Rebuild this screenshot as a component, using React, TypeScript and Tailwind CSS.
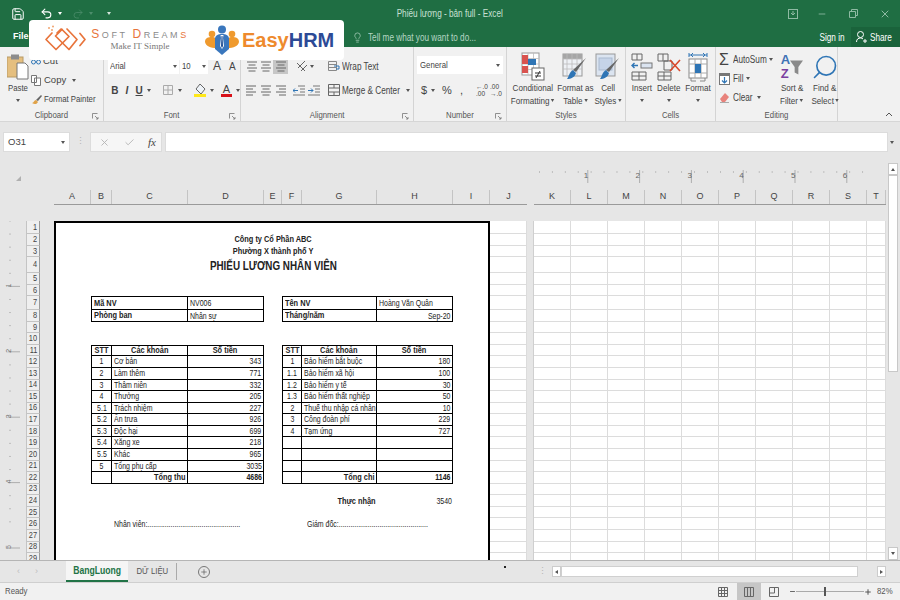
import type { ReactNode } from "react";
import { Check, Lightbulb, Save, Search, Undo2, Redo2, X, Plus, Minus } from "lucide-react";

const rowHeights = [
  "h-[13px]", "h-[11.7px]", "h-[11.7px]", "h-[16px]", "h-[12px]", "h-[11px]", "h-[14px]", "h-[12px]", "h-[11px]", "h-[11.5px]",
  "h-[11.57px]", "h-[11.57px]", "h-[11.57px]", "h-[11.57px]", "h-[11.57px]", "h-[11.57px]", "h-[11.57px]", "h-[11.57px]", "h-[11.57px]", "h-[11.57px]", "h-[11.57px]", "h-[11.57px]",
  "h-[11.6px]", "h-[11.6px]", "h-[11.6px]", "h-[11.6px]", "h-[11.6px]", "h-[11.6px]", "h-[11.6px]",
];

const pageCols = [
  { k: "A", w: "w-[37px]" },
  { k: "B", w: "w-[21px]" },
  { k: "C", w: "w-[76px]" },
  { k: "D", w: "w-[76px]" },
  { k: "E", w: "w-[18px]" },
  { k: "F", w: "w-[20px]" },
  { k: "G", w: "w-[75px]" },
  { k: "H", w: "w-[76px]" },
  { k: "I", w: "w-[37px]" },
];
const rightCols = [
  { k: "K", w: "w-[37px]" },
  { k: "L", w: "w-[37px]" },
  { k: "M", w: "w-[37px]" },
  { k: "N", w: "w-[37px]" },
  { k: "O", w: "w-[37px]" },
  { k: "P", w: "w-[37px]" },
  { k: "Q", w: "w-[37px]" },
  { k: "R", w: "w-[37px]" },
  { k: "S", w: "w-[37px]" },
  { k: "T", w: "w-[19px]" },
];

// the screenshot is squeezed sideways, so its text runs narrower than Arial
const squeezeL = "inline-block whitespace-nowrap scale-x-[.82] origin-left";
const squeezeC = "inline-block whitespace-nowrap scale-x-[.82] origin-center";
const squeezeR = "inline-block whitespace-nowrap scale-x-[.82] origin-right";

const bold = "font-bold text-[9px]";
const cells: Record<string, { t: string; c?: string }> = {
  E2: { t: "Công ty Cổ Phần ABC", c: "justify-center font-bold text-[9px]" },
  E3: { t: "Phường X thành phố Y", c: "justify-center font-bold text-[9px]" },
  E4: { t: "PHIẾU LƯƠNG NHÂN VIÊN", c: "justify-center font-bold text-[12px] pt-[2px]" },
  B7: { t: "Mã NV", c: bold },
  D7: { t: "NV006" },
  B8: { t: "Phòng ban", c: bold },
  D8: { t: "Nhân sự" },
  F7: { t: "Tên NV", c: bold },
  H7: { t: "Hoàng Văn Quân" },
  F8: { t: "Tháng/năm", c: bold },
  H8: { t: "Sep-20", c: "justify-end" },
  B11: { t: "STT", c: "justify-center font-bold text-[9px]" },
  C11: { t: "Các khoản", c: "justify-center font-bold text-[9px]" },
  D11: { t: "Số tiền", c: "justify-center font-bold text-[9px]" },
  F11: { t: "STT", c: "justify-center font-bold text-[9px]" },
  G11: { t: "Các khoản", c: "justify-center font-bold text-[9px]" },
  H11: { t: "Số tiền", c: "justify-center font-bold text-[9px]" },
  C22: { t: "Tổng thu", c: "justify-end font-bold text-[9px]" },
  D22: { t: "4686", c: "justify-end font-bold" },
  G22: { t: "Tổng chi", c: "justify-end font-bold text-[9px]" },
  H22: { t: "1146", c: "justify-end font-bold" },
  G24: { t: "Thực nhận", c: "justify-end font-bold text-[9px]" },
  H24: { t: "3540", c: "justify-end" },
  C26: { t: "Nhân viên:................................................" },
  G26: { t: "Giám đốc:..............................................", c: "pl-[5px]" },
};

const leftRows = [
  ["1", "Cơ bản", "343"], ["2", "Làm thêm", "771"], ["3", "Thâm niên", "332"], ["4", "Thưởng", "205"],
  ["5.1", "Trách nhiệm", "227"], ["5.2", "Ăn trưa", "926"], ["5.3", "Độc hại", "699"], ["5.4", "Xăng xe", "218"],
  ["5.5", "Khác", "965"], ["5", "Tổng phụ cấp", "3035"],
];
const rightRows = [
  ["1", "Bảo hiểm bắt buộc", "180"], ["1.1", "Bảo hiểm xã hội", "100"], ["1.2", "Bảo hiểm y tế", "30"],
  ["1.3", "Bảo hiểm thất nghiệp", "50"], ["2", "Thuế thu nhập cá nhân", "10"], ["3", "Công đoàn phí", "229"], ["4", "Tạm ứng", "727"],
];
leftRows.forEach(([a, b, c], i) => {
  cells[`B${12 + i}`] = { t: a, c: "justify-center" };
  cells[`C${12 + i}`] = { t: b };
  cells[`D${12 + i}`] = { t: c, c: "justify-end" };
});
rightRows.forEach(([a, b, c], i) => {
  cells[`F${12 + i}`] = { t: a, c: "justify-center" };
  cells[`G${12 + i}`] = { t: b };
  cells[`H${12 + i}`] = { t: c, c: "justify-end" };
});

// table borders of the payslip, by column and row
function borderFor(col: string, row: number) {
  const inInfo = row === 7 || row === 8;
  const inList = row >= 11 && row <= 22;
  if (!inInfo && !inList) return "";
  if (!"BCDFGH".includes(col)) return "";
  let b = "border-b border-black";
  if (row === 7 || row === 11) b += " border-t";
  if (col === "B" || col === "F") b += " border-l";
  if (col === "D" || col === "H") b += " border-r";
  if (col === "C" || col === "G") b += " border-r";
  if (inList && (col === "B" || col === "F")) b += " border-r";
  return b;
}

function squeezeFor(c?: string) {
  if (c?.includes("justify-end")) return squeezeR;
  if (c?.includes("justify-center")) return squeezeC;
  return squeezeL;
}

function Caret({ className = "" }: { className?: string }) {
  return <span className={`inline-block shrink-0 border-t-[3px] border-x-[2px] border-x-transparent border-t-[#555] ${className}`} />;
}

function Launcher() {
  return (
    <svg width="7" height="7" viewBox="0 0 7 7" className="absolute right-[4px] top-[4px]">
      <path d="M0.5 0.5h5M0.5 0.5v5M3 3l3 3M6 4v2H4" stroke="#777" strokeWidth="0.8" fill="none" />
    </svg>
  );
}

function Group({ label, w, launcher, children }: { label: string; w: string; launcher?: boolean; children: ReactNode }) {
  return (
    <div className={`${w} shrink-0 border-r border-[#d4d4d4] flex flex-col`}>
      <div className="h-[63px]">{children}</div>
      <div className="relative h-[12px] flex items-center justify-center text-[9.5px] text-[#555]">
        <span className={squeezeC}>{label}</span>
        {launcher && <Launcher />}
      </div>
    </div>
  );
}

function BigButton({ w, icon, line1, line2, caretOnly }: { w: string; icon: ReactNode; line1: string; line2?: string; caretOnly?: boolean }) {
  return (
    <div className={`${w} shrink-0 flex flex-col items-center whitespace-nowrap text-[9.5px] text-[#444] leading-[13px]`}>
      <div className="h-[29px] mt-[5px] flex items-center justify-center">{icon}</div>
      <div className="scale-x-[.85]">{line1}</div>
      {caretOnly ? (
        <Caret className="mt-[5px]" />
      ) : (
        <div className="flex items-center gap-[2px] scale-x-[.85]">
          {line2}
          <Caret />
        </div>
      )}
    </div>
  );
}

function Lines({ kind }: { kind: "left" | "center" | "right" }) {
  const ds = {
    left: "M1 2h10M1 5h7M1 8h10M1 11h7",
    center: "M1 2h10M2.5 5h7M1 8h10M2.5 11h7",
    right: "M1 2h10M4 5h7M1 8h10M4 11h7",
  };
  return (
    <svg width="12" height="13" viewBox="0 0 12 13">
      <path d={ds[kind]} stroke="#666" strokeWidth="1" />
    </svg>
  );
}

function ConditionalIcon() {
  return (
    <svg width="24" height="29" viewBox="0 0 24 29">
      <rect x="1" y="1" width="17" height="22" fill="#fff" stroke="#999" />
      <path d="M7 1v22M12.500 1v22M1 6.500h17M1 12h17M1 17.500h17" stroke="#bbb" strokeWidth="0.8" />
      <rect x="1" y="3" width="6" height="9" fill="#d9534f" />
      <rect x="7" y="7" width="8" height="6" fill="#2f75b5" />
      <rect x="1" y="14" width="6" height="7" fill="#d9534f" />
      <rect x="11" y="16" width="12" height="12" fill="#fff" stroke="#666" />
      <path d="M14 21h6M14 24h6M19 19l-4 7" stroke="#333" />
    </svg>
  );
}

function BrushTableIcon({ plain }: { plain?: boolean }) {
  return (
    <svg width="26" height="29" viewBox="0 0 26 29">
      <rect x="1" y="2" width="19" height="22" fill={plain ? "#dbe4f0" : "#eef1f5"} stroke="#999" />
      {plain ? (
        <rect x="4" y="6" width="13" height="12" fill="#c6d4e8" stroke="#a9b9cf" />
      ) : (
        <>
          <rect x="1" y="2" width="19" height="5" fill="#a6a6a6" />
          <path d="M5 2v22M10 2v22M15 2v22M1 7h19M1 12h19M1 17h19" stroke="#bbb" strokeWidth="0.8" />
        </>
      )}
      <path d="M24 6L14 20l-3-2z" fill="#666" />
      <path d="M11 18l3 3c-1 4-5 6-9 6 2-2 2-7 6-9z" fill="#2f75b5" />
    </svg>
  );
}

function InsertIcon() {
  return (
    <svg width="22" height="28" viewBox="0 0 22 28">
      <path d="M1 1h10v6H1zM6 1v6M1 19h14v8H1zM8 19v8M1 23h14" stroke="#666" fill="none" />
      <path d="M1 12.500h6M3.500 10l-2.500 2.500L3.500 15" stroke="#2f75b5" strokeWidth="1.400" fill="none" />
      <rect x="10" y="10" width="11" height="5" fill="#dbe4f0" stroke="#777" />
    </svg>
  );
}

function DeleteIcon() {
  return (
    <svg width="26" height="28" viewBox="0 0 26 28">
      <path d="M2 1h10v7H2zM7 1v7M2 19h13v8H2zM8 19v8M2 23h13M8 8h8v9H8z" stroke="#666" fill="none" />
      <path d="M14 7l10 11M24 7L14 18" stroke="#d9482b" strokeWidth="1.600" />
    </svg>
  );
}

function FormatIcon() {
  return (
    <svg width="20" height="30" viewBox="0 0 20 30">
      <path d="M1 3h18M1 1v4M19 1v4" stroke="#2f75b5" />
      <path d="M3 3l2-2M3 3l2 2M17 3l-2-2M17 3l-2 2" stroke="#2f75b5" fill="none" />
      <rect x="1" y="7" width="18" height="19" fill="#fff" stroke="#888" />
      <path d="M7 7v19M13 7v19M1 12h18M1 21h18" stroke="#aaa" />
      <rect x="7" y="12" width="6" height="9" fill="#2f75b5" />
      <path d="M3 26v3h5M12 29h5v-3" stroke="#888" fill="none" />
    </svg>
  );
}

function SortIcon() {
  return (
    <div className="relative flex items-center">
      <div className="flex flex-col leading-[14px] text-[13px] font-bold">
        <span className="text-[#3f72b5]">A</span>
        <span className="text-[#7b3fa0]">Z</span>
      </div>
      <svg width="13" height="18" viewBox="0 0 14 18">
        <path d="M0 2h14L9 9v8l-4-2V9z" fill="#8a8a8a" />
      </svg>
    </div>
  );
}

function Clipboard() {
  return (
    <svg width="22" height="26" viewBox="0 0 22 26">
      <rect x="0" y="3" width="16" height="20" fill="#e5bf7f" stroke="#b89a66" />
      <rect x="4" y="0.500" width="8" height="5" fill="#8c8c8c" />
      <path d="M10 9h8l3 3v13H10z" fill="#fff" stroke="#777" />
    </svg>
  );
}

function SoftDreamsMark() {
  return (
    <svg width="42" height="32" viewBox="0 0 42 32">
      <g fill="none" stroke="#e8743b" strokeWidth="1.700" strokeLinejoin="round" strokeLinecap="round">
        <path d="M8 9L2 15.500l10 10 13-13-7-7" />
        <path d="M13 9l4-4 1 .5L11.500 12 25 25.500l8-10L23 5" />
        <path d="M36 9.500l5 6-5 6" />
      </g>
      <g fill="#f0a36e">
        <circle cx="5" cy="4" r="1" />
        <circle cx="9" cy="2.500" r="1" />
        <circle cx="8" cy="6" r="1" />
      </g>
    </svg>
  );
}

function HrmMark() {
  return (
    <svg width="36" height="30" viewBox="0 0 36 30">
      <circle cx="18" cy="4.500" r="4" fill="#3a77bd" />
      <circle cx="8" cy="9" r="3.300" fill="#ef9a2e" />
      <circle cx="28" cy="9" r="3.300" fill="#ef9a2e" />
      <path d="M1 17c0-4 3-5 7-5 3 0 5 2 5 5v6C6 23 2 21 1 17zM35 17c0-4-3-5-7-5-3 0-5 2-5 5v6c7 0 11-2 12-6z" fill="#ef9a2e" />
      <path d="M11 13c1-3 3-4 7-4s6 1 7 4v11l-7 6-7-6z" fill="#3a77bd" />
      <path d="M16.500 10h3l-.5 3 1 8-2 3-2-3 1-8z" fill="#fff" />
      <path d="M17.500 11h1l.5 10-1 2-1-2z" fill="#1f4f94" />
    </svg>
  );
}

function LeftRuler() {
  const minor = Array.from({ length: 24 }, (_, i) => i * 13.08 + 221);
  const major = [1, 2, 3, 4, 5];
  return (
    <svg width="26" height="339" viewBox="0 221 26 339">
      {minor.map((y) => (
        <path key={y} d={`M9 ${y}h2`} stroke="#bdbdbd" />
      ))}
      {major.map((n) => {
        const y = 221 + n * 65.4;
        return (
          <g key={n}>
            <path d={`M8 ${y}h12`} stroke="#888" strokeWidth="0.600" />
            <text x="13" y={y + 3} fontSize="7" fill="#777" transform={`rotate(-90 11 ${y + 3})`}>
              {n}
            </text>
          </g>
        );
      })}
    </svg>
  );
}

function TopRuler() {
  const ticks = Array.from({ length: 26 }, (_, i) => i * 12.93 + 6);
  return (
    <svg width="353" height="30" viewBox="533 160 353 30" className="mt-[1px]">
      {ticks.map((x) => (
        <path key={x} d={`M${533 + x} 172h0.800`} stroke="#b5b5b5" strokeWidth="2" />
      ))}
      {[1, 2, 3, 4, 5, 6].map((n) => {
        const x = 532 + n * 51.8;
        return (
          <g key={n}>
            <path d={`M${x + 4} 170v13`} stroke="#888" strokeWidth="0.600" />
            <text x={x} y="178" fontSize="8" fill="#666">
              {n}
            </text>
          </g>
        );
      })}
    </svg>
  );
}

export default function App() {
  return (
    <div className="relative w-[900px] h-[600px] overflow-hidden bg-[#e6e6e6] text-[#333] flex flex-col [font-family:'Liberation_Sans',Arial,sans-serif] [&_svg]:shrink-0">
      {/* title bar + tab strip */}
      <div className="h-[47px] shrink-0 bg-[#1f6e43] text-white flex flex-col">
        <div className="h-[27px] grid grid-cols-[1fr_auto_1fr] items-center">
          <div className="flex items-center pl-[11px]">
            <Save size={14} strokeWidth={1.7} />
            <Undo2 size={13} strokeWidth={2} className="ml-[15px]" />
            <Caret className="ml-[5px] !border-t-white" />
            <Redo2 size={12} strokeWidth={1.5} className="ml-[10px] text-[#4d8d6c]" />
            <Caret className="ml-[5px] !border-t-[#4d8d6c]" />
            <Caret className="ml-[14px] !border-t-[#d5e6dc]" />
          </div>
          <div className={`${squeezeC} text-[10px] text-[#c9e0d3]`}>Phiếu lương - bản full - Excel</div>
          <div className="flex items-center justify-end pr-[9px] text-[#8fbaa3]">
            <svg width="10" height="10" viewBox="0 0 10 10">
              <rect x="0.500" y="0.500" width="9" height="9" fill="none" stroke="currentColor" />
              <path d="M5 2v4M3 4l2 2 2-2" stroke="currentColor" fill="none" />
            </svg>
            <Minus size={10} className="ml-[19px]" />
            <svg width="9" height="9" viewBox="0 0 9 9" className="ml-[22px]">
              <path d="M0.500 2.500h6v6h-6zM2.500 2.500v-2h6v6h-2" fill="none" stroke="currentColor" />
            </svg>
            <X size={12} className="ml-[21px]" />
          </div>
        </div>
        <div className="h-[20px] flex items-center text-[10px]">
          <span className="ml-[13px] w-[14px] font-bold text-[9px]">File</span>
          <Lightbulb size={11} strokeWidth={1.500} className="ml-[325px] text-[#b5d6c3]" />
          <span className={`${squeezeL} ml-[5px] text-[#b5d6c3]`}>Tell me what you want to do...</span>
          <span className={`${squeezeR} ml-auto`}>Sign in</span>
          <div className="ml-[6px] w-[49px] h-full bg-[#1a633b] flex items-center pl-[5px] gap-[3px]">
            <svg width="11" height="12" viewBox="0 0 11 12">
              <circle cx="4.500" cy="3.500" r="3" fill="none" stroke="#fff" />
              <path d="M0.500 11c0-3 2-4 4-4 1 0 2 .3 2.500 1M7 10h4M9 8v4" fill="none" stroke="#fff" />
            </svg>
            <span className={squeezeL}>Share</span>
          </div>
        </div>
      </div>

      {/* ribbon */}
      <div className="h-[75px] shrink-0 bg-[#f1f1f1] border-b border-[#d6d6d6] flex">
        <Group label="Clipboard" w="w-[104px]" launcher>
          <div className="flex h-full text-[9.5px] text-[#444]">
            <div className="w-[31px] pl-[7px] pt-[7px] flex flex-col items-start">
              <Clipboard />
              <span className={`${squeezeL} mt-[1px] ml-[1px]`}>Paste</span>
              <Caret className="mt-[4px] ml-[9px]" />
            </div>
            <div className="flex flex-col pt-[8px] gap-[7px]">
              <div className="h-[12px] flex items-center gap-[2px]">
                <svg width="10" height="8" viewBox="0 0 10 8">
                  <circle cx="2.500" cy="5" r="2" fill="none" stroke="#2f75b5" />
                  <circle cx="7.500" cy="5" r="2" fill="none" stroke="#2f75b5" />
                </svg>
                Cut
              </div>
              <div className="h-[12px] flex items-center gap-[3px]">
                <svg width="10" height="11" viewBox="0 0 10 11">
                  <path d="M0.500 0.500h5v7h-5zM3.500 3h6v7.500h-6z" fill="#fff" stroke="#777" />
                </svg>
                Copy
                <Caret className="ml-[3px]" />
              </div>
              <div className="h-[12px] flex items-center gap-[2px]">
                <svg width="11" height="11" viewBox="0 0 11 11">
                  <path d="M5 6L10 1l1 1-4 5z" fill="#666" />
                  <path d="M1 9c2 0 2-3 4-3l2 2c-1 2-3 3-6 1z" fill="#e0a247" />
                </svg>
                <span className={squeezeL}>Format Painter</span>
              </div>
            </div>
          </div>
        </Group>

        <Group label="Font" w="w-[137px]" launcher>
          <div className="flex flex-col pt-[11px] text-[#444]">
            <div className="flex items-center h-[16px] pl-[4px]">
              <div className="w-[71px] h-full bg-white flex items-center justify-between px-[2px] text-[9.5px]">
                <span className={squeezeL}>Arial</span>
                <Caret />
              </div>
              <div className="w-[28px] h-full ml-[1px] bg-white flex items-center justify-between px-[2px] text-[9.5px]">
                <span className={squeezeL}>10</span>
                <Caret />
              </div>
              <span className="ml-[5px] w-[10px] text-[12px]">A</span>
              <span className="ml-[6px] text-[10px]">A</span>
            </div>
            <div className="flex items-center h-[16px] mt-[8px] pl-[5px] text-[10px]">
              <span className="font-bold w-[14px] text-center">B</span>
              <span className="italic w-[15px] text-center font-bold">I</span>
              <span className="underline w-[14px] text-center font-bold">U</span>
              <Caret className="ml-[2px]" />
              <svg width="10" height="10" viewBox="0 0 10 10" className="ml-[12px]">
                <path d="M0.500 0.500h9v9h-9zM5 0.500v9M0.500 5h9" fill="none" stroke="#aaa" />
              </svg>
              <Caret className="ml-[5px]" />
              <svg width="12" height="14" viewBox="0 0 12 14" className="ml-[12px]">
                <path d="M6 1l5 5-4 5-5-5z" fill="#eef3f8" stroke="#666" />
                <rect x="0" y="11" width="12" height="3" fill="#ffe81a" />
              </svg>
              <Caret className="ml-[4px]" />
              <div className="ml-[7px] flex flex-col items-center w-[11px] text-[11px] leading-[10px]">
                A
                <div className="w-[11px] h-[3px] bg-[#d8121a]" />
              </div>
              <Caret className="ml-[4px]" />
            </div>
          </div>
        </Group>

        <Group label="Alignment" w="w-[173px]" launcher>
          <div className="flex flex-col pt-[11px] text-[10px] text-[#444]">
            <div className="flex items-center h-[16px] pl-[5px]">
              <Lines kind="center" />
              <span className="w-[2px]" />
              <Lines kind="center" />
              <div className="ml-[1px] w-[15px] h-[15px] bg-[#c6c6c6] flex items-center justify-center">
                <Lines kind="center" />
              </div>
              <svg width="12" height="12" viewBox="0 0 12 12" className="ml-[8px]">
                <path d="M1 3l8 8M2 8l7-7M5 11l6-6" stroke="#666" fill="none" />
              </svg>
              <Caret className="ml-[2px]" />
              <svg width="12" height="12" viewBox="0 0 12 12" className="ml-[14px]">
                <path d="M0.500 1.500h8v9h-8zM0.500 4.500h8M0.500 7.500h8" fill="none" stroke="#888" />
                <path d="M6 6h5v3H8" fill="none" stroke="#2f75b5" />
              </svg>
              <span className={`${squeezeL} ml-[2px]`}>Wrap Text</span>
            </div>
            <div className="flex items-center h-[16px] mt-[8px] pl-[4px]">
              <Lines kind="left" />
              <span className="w-[3px]" />
              <Lines kind="center" />
              <span className="w-[3px]" />
              <Lines kind="right" />
              <svg width="12" height="11" viewBox="0 0 12 11" className="ml-[6px]">
                <path d="M5 1h7M7 4h5M7 7h5M0 10h12" stroke="#777" />
                <path d="M5 5.500H0M2 3.500l-2 2 2 2" stroke="#2f75b5" fill="none" />
              </svg>
              <svg width="12" height="11" viewBox="0 0 12 11" className="ml-[3px]">
                <path d="M5 1h7M7 4h5M7 7h5M0 10h12" stroke="#777" />
                <path d="M0 5.500h5M3 3.500l2 2-2 2" stroke="#2f75b5" fill="none" />
              </svg>
              <svg width="12" height="12" viewBox="0 0 12 12" className="ml-[8px]">
                <path d="M0.500 0.500h11v11h-11zM0.500 4h11M0.500 8h11M6 0.500V4M6 8v3.500" fill="none" stroke="#666" />
              </svg>
              <span className={`${squeezeL} ml-[2px] shrink-0`}>Merge &amp; Center</span>
              <Caret className="-ml-[7px]" />
            </div>
          </div>
        </Group>

        <Group label="Number" w="w-[93px]" launcher>
          <div className="flex flex-col pt-[9px] text-[#444]">
            <div className="mx-[3px] h-[18px] bg-white flex items-center justify-between px-[3px] text-[9.5px]">
              <span className={squeezeL}>General</span>
              <Caret />
            </div>
            <div className="flex items-center h-[16px] mt-[8px] pl-[7px] text-[11px]">
              <span className="w-[6px]">$</span>
              <Caret className="ml-[4px]" />
              <span className="ml-[7px] w-[10px]">%</span>
              <span className="ml-[8px] w-[4px]">,</span>
              <div className="ml-[12px] w-[12px] flex flex-col text-[6.5px] leading-[7px] text-[#444] whitespace-nowrap">
                <span>←.0</span>
                <span>.00</span>
              </div>
              <div className="ml-[2px] w-[12px] flex flex-col text-[6.5px] leading-[7px] text-[#444] whitespace-nowrap">
                <span>.00</span>
                <span>→.0</span>
              </div>
            </div>
          </div>
        </Group>

        <Group label="Styles" w="w-[119px]">
          <div className="flex">
            <BigButton w="w-[52px]" icon={<ConditionalIcon />} line1="Conditional" line2="Formatting" />
            <BigButton w="w-[32px]" icon={<BrushTableIcon />} line1="Format as" line2="Table" />
            <BigButton w="w-[34px]" icon={<BrushTableIcon plain />} line1="Cell" line2="Styles" />
          </div>
        </Group>

        <Group label="Cells" w="w-[90px]">
          <div className="flex pl-[2px]">
            <BigButton w="w-[28px]" icon={<InsertIcon />} line1="Insert" caretOnly />
            <BigButton w="w-[26px]" icon={<DeleteIcon />} line1="Delete" caretOnly />
            <BigButton w="w-[32px]" icon={<FormatIcon />} line1="Format" caretOnly />
          </div>
        </Group>

        <Group label="Editing" w="w-[122px]">
          <div className="flex text-[10px] text-[#444]">
            <div className="w-[59px] shrink-0 flex flex-col pt-[3px] pl-[3px]">
              <div className="h-[19px] flex items-center">
                <span className="text-[16px] leading-none w-[14px]">Σ</span>
                <span className={`${squeezeL} w-[36px]`}>AutoSum</span>
                <Caret />
              </div>
              <div className="h-[19px] flex items-center">
                <svg width="11" height="12" viewBox="0 0 11 12" className="mr-[3px]">
                  <rect x="0.500" y="0.500" width="10" height="11" fill="#fff" stroke="#777" />
                  <rect x="0.500" y="0.500" width="10" height="2.500" fill="#777" />
                  <path d="M5.500 4v6M3 7.500l2.500 2.500L8 7.500" stroke="#2f75b5" fill="none" strokeWidth="1.200" />
                </svg>
                <span className={squeezeL}>Fill</span>
                <Caret />
              </div>
              <div className="h-[19px] flex items-center">
                <svg width="11" height="11" viewBox="0 0 11 11" className="mr-[3px]">
                  <path d="M6 1l4 4-4 5H3L1 7z" fill="#e8837c" />
                  <path d="M1 10.500h9" stroke="#aaa" />
                </svg>
                <span className={squeezeL}>Clear</span>
                <Caret />
              </div>
            </div>
            <BigButton w="w-[34px]" icon={<SortIcon />} line1="Sort &" line2="Filter" />
            <BigButton w="w-[32px]" icon={<Search size={28} strokeWidth={1.4} className="text-[#2f75b5] -scale-x-100" />} line1="Find &" line2="Select" />
          </div>
        </Group>

        <div className="flex-1 flex items-end justify-end pr-[7px] pb-[4px]">
          <svg width="8" height="5" viewBox="0 0 8 5">
            <path d="M1 4l3-3 3 3" stroke="#555" fill="none" />
          </svg>
        </div>
      </div>

      {/* formula bar */}
      <div className="shrink-0 flex items-center h-[20px] mt-[10px] text-[#444]">
        <div className="ml-[3px] w-[67px] h-full bg-white border border-[#dcdcdc] flex items-center justify-between px-[4px] text-[9.5px]">
          O31
          <Caret />
        </div>
        <div className="w-[20px] flex justify-center text-[#b5b5b5] text-[9px]">⋮</div>
        <div className="w-[72px] h-full bg-[#f6f6f6] border border-[#dcdcdc] flex items-center pl-[8px] text-[#b5b5b5]">
          <X size={11} />
          <Check size={11} className="ml-[14px]" />
          <span className="ml-[13px] text-[11px] italic text-[#444] [font-family:'Liberation_Serif',serif]">fx</span>
        </div>
        <div className="ml-[3px] w-[723px] h-full bg-white border border-[#dcdcdc]" />
        <Caret className="ml-[2px]" />
      </div>

      {/* sheet area */}
      <div className="flex-1 min-h-0 flex mt-[7px]">
        <div className="w-[888px] shrink-0 flex flex-col">
          <div className="h-[31px] shrink-0 flex">
            <div className="w-[533px] shrink-0 flex items-end pl-[15px] pb-[8px]">
              <svg width="7" height="7" viewBox="0 0 7 7">
                <path d="M6 1v5H1z" fill="#b0b0b0" />
              </svg>
            </div>
            <TopRuler />
          </div>

          {/* column headers */}
          <div className="h-[15px] shrink-0 flex pl-[54px] text-[9px] text-[#444]">
            <div className="flex border-b border-[#9a9a9a]">
              {pageCols.map((c) => (
                <div key={c.k} className={`${c.w} border-r border-[#c4c4c4] flex items-center justify-center`}>
                  {c.k}
                </div>
              ))}
              <div className="w-[37px] flex items-center justify-center">J</div>
            </div>
            <div className="w-[7px]" />
            <div className="flex border-b border-[#9a9a9a]">
              {rightCols.map((c) => (
                <div key={c.k} className={`${c.w} border-r border-[#c4c4c4] flex items-center justify-center`}>
                  {c.k}
                </div>
              ))}
            </div>
          </div>

          <div className="h-[16px] shrink-0" />

          <div className="h-[339px] flex overflow-hidden">
            <LeftRuler />
            <div className="flex flex-col">
              {rowHeights.map((h, i) => {
                const row = i + 1;
                return (
                  <div key={row} className={`flex shrink-0 ${h}`}>
                    <div className="w-[14px] bg-[#efefef] border border-t-0 border-[#c4c4c4] border-r-[#9a9a9a] flex items-center justify-end pr-[2px] text-[9px] text-[#444] leading-none">
                      <span className={squeezeR}>{row}</span>
                    </div>
                    <div className="w-[14px]" />
                    {pageCols.map((c) => {
                      const cell = cells[`${c.k}${row}`];
                      const edge = `${c.k === "A" ? "border-l-2 border-black " : ""}${c.k === "I" ? "border-r-2 border-black " : ""}${row === 1 ? "border-t-2 border-black " : ""}`;
                      return (
                        <div
                          key={c.k}
                          className={`${c.w} shrink-0 bg-white flex items-center px-[1.500px] whitespace-nowrap text-[8.500px] text-[#222] leading-none ${edge}${borderFor(c.k, row)} ${cell?.c ?? ""}`}
                        >
                          {cell && <span className={`relative z-10 ${squeezeFor(cell.c)}`}>{cell.t}</span>}
                        </div>
                      );
                    })}
                    <div className="w-[37px] shrink-0 bg-white border-b border-r border-[#dcdcdc]" />
                    <div className="w-[7px] shrink-0 border-r border-[#cfcfcf]" />
                    {rightCols.map((c) => (
                      <div key={c.k} className={`${c.w} shrink-0 bg-white border-b border-r border-[#dcdcdc]`} />
                    ))}
                  </div>
                );
              })}
            </div>
          </div>
        </div>

        {/* vertical scrollbar */}
        <div className="w-[12px] shrink-0 flex flex-col pr-[2px]">
          <div className="h-[12px] mt-[4px] bg-white border border-[#c8c8c8] flex items-center justify-center">
            <span className="border-b-[3px] border-x-[2px] border-x-transparent border-b-[#555]" />
          </div>
          <div className="h-[197px] bg-white border border-[#c8c8c8]" />
          <div className="flex-1" />
          <div className="h-[13px] bg-white border border-[#c8c8c8] flex items-center justify-center">
            <Caret />
          </div>
        </div>
      </div>

      {/* sheet tabs */}
      <div className="h-[23px] shrink-0 border-t border-[#b5b5b5] border-b border-b-[#cfcfcf] flex items-center text-[9.5px] text-[#555]">
        <span className="ml-[17px] w-[18px] text-[#bdbdbd] text-[9px]">‹</span>
        <span className="w-[31px] text-[#bdbdbd] text-[9px]">›</span>
        <div className="w-[62px] h-full bg-[#f5f5f5] border-b-2 border-[#217346] flex items-center justify-center font-bold text-[#217346] text-[10.5px]">
          <span className={squeezeC}>BangLuong</span>
        </div>
        <div className="w-[49px] h-[17px] border-r border-[#aaa] flex items-center justify-center">
          <span className={squeezeC}>DỮ LIỆU</span>
        </div>
        <div className="ml-[21px] w-[12px] h-[12px] rounded-full border border-[#777] flex items-center justify-center">
          <Plus size={8} />
        </div>
        <div className="ml-[294px] w-[2px] h-[2px] self-start mt-[5px] bg-[#222]" />
        <div className="ml-[32px] w-[4px] text-[#b5b5b5] text-[9px]">⋮</div>
        <div className="ml-[10px] w-[9px] h-[11px] bg-white border border-[#ccc] flex items-center justify-center">
          <span className="border-r-[3px] border-y-[2px] border-y-transparent border-r-[#555]" />
        </div>
        <div className="w-[297px] h-[11px] bg-white border border-[#d0d0d0]" />
        <div className="w-[19px]" />
        <div className="w-[9px] h-[11px] bg-white border border-[#ccc] flex items-center justify-center">
          <span className="border-l-[3px] border-y-[2px] border-y-transparent border-l-[#555]" />
        </div>
      </div>

      {/* status bar */}
      <div className="h-[17px] shrink-0 bg-[#f1f1f1] flex items-center text-[9.5px] text-[#555]">
        <span className={`${squeezeL} ml-[5px]`}>Ready</span>
        <svg width="10" height="10" viewBox="0 0 10 10" className="ml-auto">
          <path d="M0.500 0.500h9v9h-9zM3.500 0.500v9M6.500 0.500v9M0.500 3.500h9M0.500 6.500h9" fill="none" stroke="#666" />
        </svg>
        <div className="ml-[9px] w-[24px] h-full bg-[#c6c6c6] flex items-center justify-center">
          <svg width="10" height="10" viewBox="0 0 10 10">
            <path d="M0.500 0.500h9v9h-9zM3.500 0.500v9M6.500 0.500v9" fill="none" stroke="#666" />
          </svg>
        </div>
        <svg width="10" height="10" viewBox="0 0 10 10" className="ml-[8px]">
          <path d="M0.500 0.500h9v9h-9zM0.500 6h5V0.500" fill="none" stroke="#666" />
        </svg>
        <Minus size={7} strokeWidth={3} className="ml-[10px]" />
        <div className="w-[68px] flex items-center">
          <div className="w-[28px] h-px bg-[#aaa]" />
          <div className="w-[2px] h-[9px] bg-[#555]" />
          <div className="flex-1 h-px bg-[#aaa]" />
        </div>
        <Plus size={8} strokeWidth={3} />
        <span className={`${squeezeL} ml-[5px] w-[14px] mr-[9px]`}>82%</span>
      </div>

      {/* brand banner pasted over the ribbon */}
      <div className="absolute left-[29px] top-[20px] w-[315px] h-[40px] bg-white rounded-[4px] flex items-center">
        <div className="ml-[15px]">
          <SoftDreamsMark />
        </div>
        <div className="ml-[4px] w-[100px] shrink-0 flex flex-col items-center">
          <div className="text-[9px] tracking-[2.6px] whitespace-nowrap text-[#8a8a8a] leading-[12px]">
            <span className="text-[12px] text-[#e8743b]">S</span>OFT <span className="text-[12px] text-[#e8743b]">D</span>REAM<span className="text-[#e8743b]">S</span>
          </div>
          <div className="text-[9px] leading-[11px] text-[#777] [font-family:'Liberation_Serif',serif]">Make IT Simple</div>
        </div>
        <div className="ml-[14px]">
          <HrmMark />
        </div>
        <div className="ml-[2px] text-[20px] font-bold leading-none whitespace-nowrap">
          <span className="text-[#ee8a2d]">Easy</span>
          <span className="text-[#2c4a96]">HRM</span>
        </div>
      </div>
    </div>
  );
}
